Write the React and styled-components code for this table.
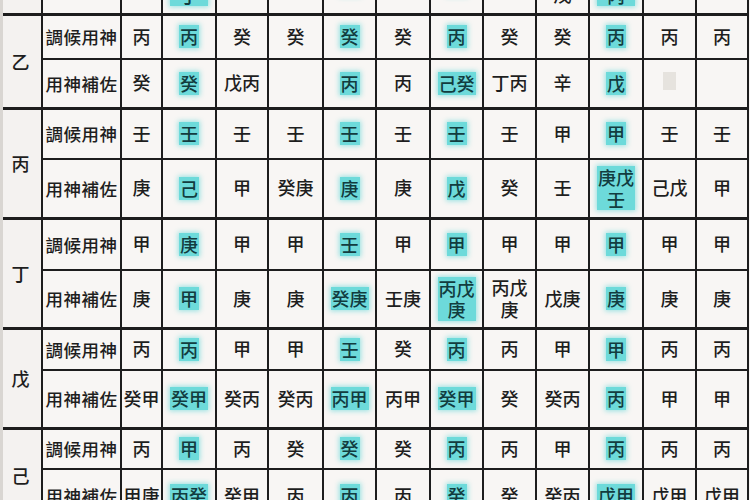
import React from 'react';
import styled, { createGlobalStyle } from 'styled-components';

const GlobalStyle = createGlobalStyle`
  html, body {
    margin: 0;
    padding: 0;
    background: #f7f5f3;
  }
  body {
    font-family: "Noto Sans CJK TC", "Noto Sans CJK SC", "Noto Sans", sans-serif;
    color: #1e1e1e;
    overflow: hidden;
  }
`;

const Viewport = styled.div`
  width: 750px;
  height: 500px;
  overflow: hidden;
  border-left: 3px solid #d9d6d2;
  box-sizing: border-box;
`;

const Table = styled.table`
  table-layout: fixed;
  border-collapse: collapse;
  width: 748px;
  margin-top: -92px;
  margin-left: -3px;
`;

const Cell = styled.td`
  border: 2px solid #1d1d1d;
  border-top-width: ${p => (p.$blockStart ? '3px' : '2px')};
  padding: 0;
  text-align: center;
  vertical-align: middle;
  font-size: 18px;
  font-weight: 500;
  line-height: 1.2;
  background: #f8f6f4;
  white-space: pre-line;
`;

const StemCell = styled(Cell)`
  border-left: none;
  border-top-width: 3px;
  background: #f4f2f0;
`;

const LabelCell = styled(Cell)`
  font-size: 17.5px;
  letter-spacing: 0.5px;
`;

const Row = styled.tr`
  height: ${p => p.$h}px;
`;

const Mark = styled.span`
  display: inline-block;
  background: #6ddada;
  color: #123c3f;
  padding: 1px 1px 0;
  box-shadow: 0 0 5px 1px rgba(100, 215, 215, 0.65);
`;

const Ghost = styled.span`
  display: inline-block;
  width: 13px;
  height: 18px;
  background: #e6e3de;
`;

const widths = [42, 79, 41, 54, 52, 55, 53, 54, 53, 53, 53, 54, 53, 52];

const blocks = [
  {
    stem: '甲',
    rows: [
      { label: '調候用神', h: 45, cells: ['庚', '*丙', '庚', '庚', '*丁', '庚', '*丁', '庚', '庚', '*庚', '庚', '庚'] },
      { label: '用神補佐', h: 60, cells: ['丁', '*丙癸\n丁', '丁', '丁', '*丁', '丁', '*丁', '丁', '丁丙\n戊', '*庚丁\n丙', '丁', '丁'] },
    ],
  },
  {
    stem: '乙',
    rows: [
      { label: '調候用神', h: 44, cells: ['丙', '*丙', '癸', '癸', '*癸', '癸', '*丙', '癸', '癸', '*丙', '丙', '丙'] },
      { label: '用神補佐', h: 50, cells: ['癸', '*癸', '戊丙', '', '*丙', '丙', '*己癸', '丁丙', '辛', '*戊', '#', ''] },
    ],
  },
  {
    stem: '丙',
    rows: [
      { label: '調候用神', h: 50, cells: ['壬', '*壬', '壬', '壬', '*壬', '壬', '*壬', '壬', '甲', '*甲', '壬', '壬'] },
      { label: '用神補佐', h: 60, cells: ['庚', '*己', '甲', '癸庚', '*庚', '庚', '*戊', '癸', '壬', '*庚戊\n壬', '己戊', '甲'] },
    ],
  },
  {
    stem: '丁',
    rows: [
      { label: '調候用神', h: 51, cells: ['甲', '*庚', '甲', '甲', '*壬', '甲', '*甲', '甲', '甲', '*甲', '甲', '甲'] },
      { label: '用神補佐', h: 59, cells: ['庚', '*甲', '庚', '庚', '*癸庚', '壬庚', '*丙戊\n庚', '丙戊\n庚', '戊庚', '*庚', '庚', '庚'] },
    ],
  },
  {
    stem: '戊',
    rows: [
      { label: '調候用神', h: 41, cells: ['丙', '*丙', '甲', '甲', '*壬', '癸', '*丙', '丙', '甲', '*甲', '丙', '丙'] },
      { label: '用神補佐', h: 59, cells: ['癸甲', '*癸甲', '癸丙', '癸丙', '*丙甲', '丙甲', '*癸甲', '癸', '癸丙', '*丙', '甲', '甲'] },
    ],
  },
  {
    stem: '己',
    rows: [
      { label: '調候用神', h: 40, cells: ['丙', '*甲', '丙', '癸', '*癸', '癸', '*丙', '丙', '甲', '*丙', '丙', '丙'] },
      { label: '用神補佐', h: 54, cells: ['甲庚', '*丙癸', '癸甲', '丙', '*丙', '丙', '*癸', '癸', '癸丙', '*戊甲', '戊甲', '戊甲'] },
    ],
  },
];

const renderValue = value => {
  if (value === '#') return <Ghost />;
  if (value.startsWith('*')) return <Mark>{value.slice(1)}</Mark>;
  return value;
};

export default function App() {
  return (
    <>
      <GlobalStyle />
      <Viewport>
        <Table>
          <colgroup>
            {widths.map((w, i) => <col key={i} style={{ width: w }} />)}
          </colgroup>
          <tbody>
            {blocks.map(block => block.rows.map((row, ri) => (
              <Row key={block.stem + ri} $h={row.h}>
                {ri === 0 && <StemCell rowSpan={2}>{block.stem}</StemCell>}
                <LabelCell $blockStart={ri === 0}>{row.label}</LabelCell>
                {row.cells.map((c, ci) => (
                  <Cell key={ci} $blockStart={ri === 0}>{renderValue(c)}</Cell>
                ))}
              </Row>
            )))}
          </tbody>
        </Table>
      </Viewport>
    </>
  );
}
